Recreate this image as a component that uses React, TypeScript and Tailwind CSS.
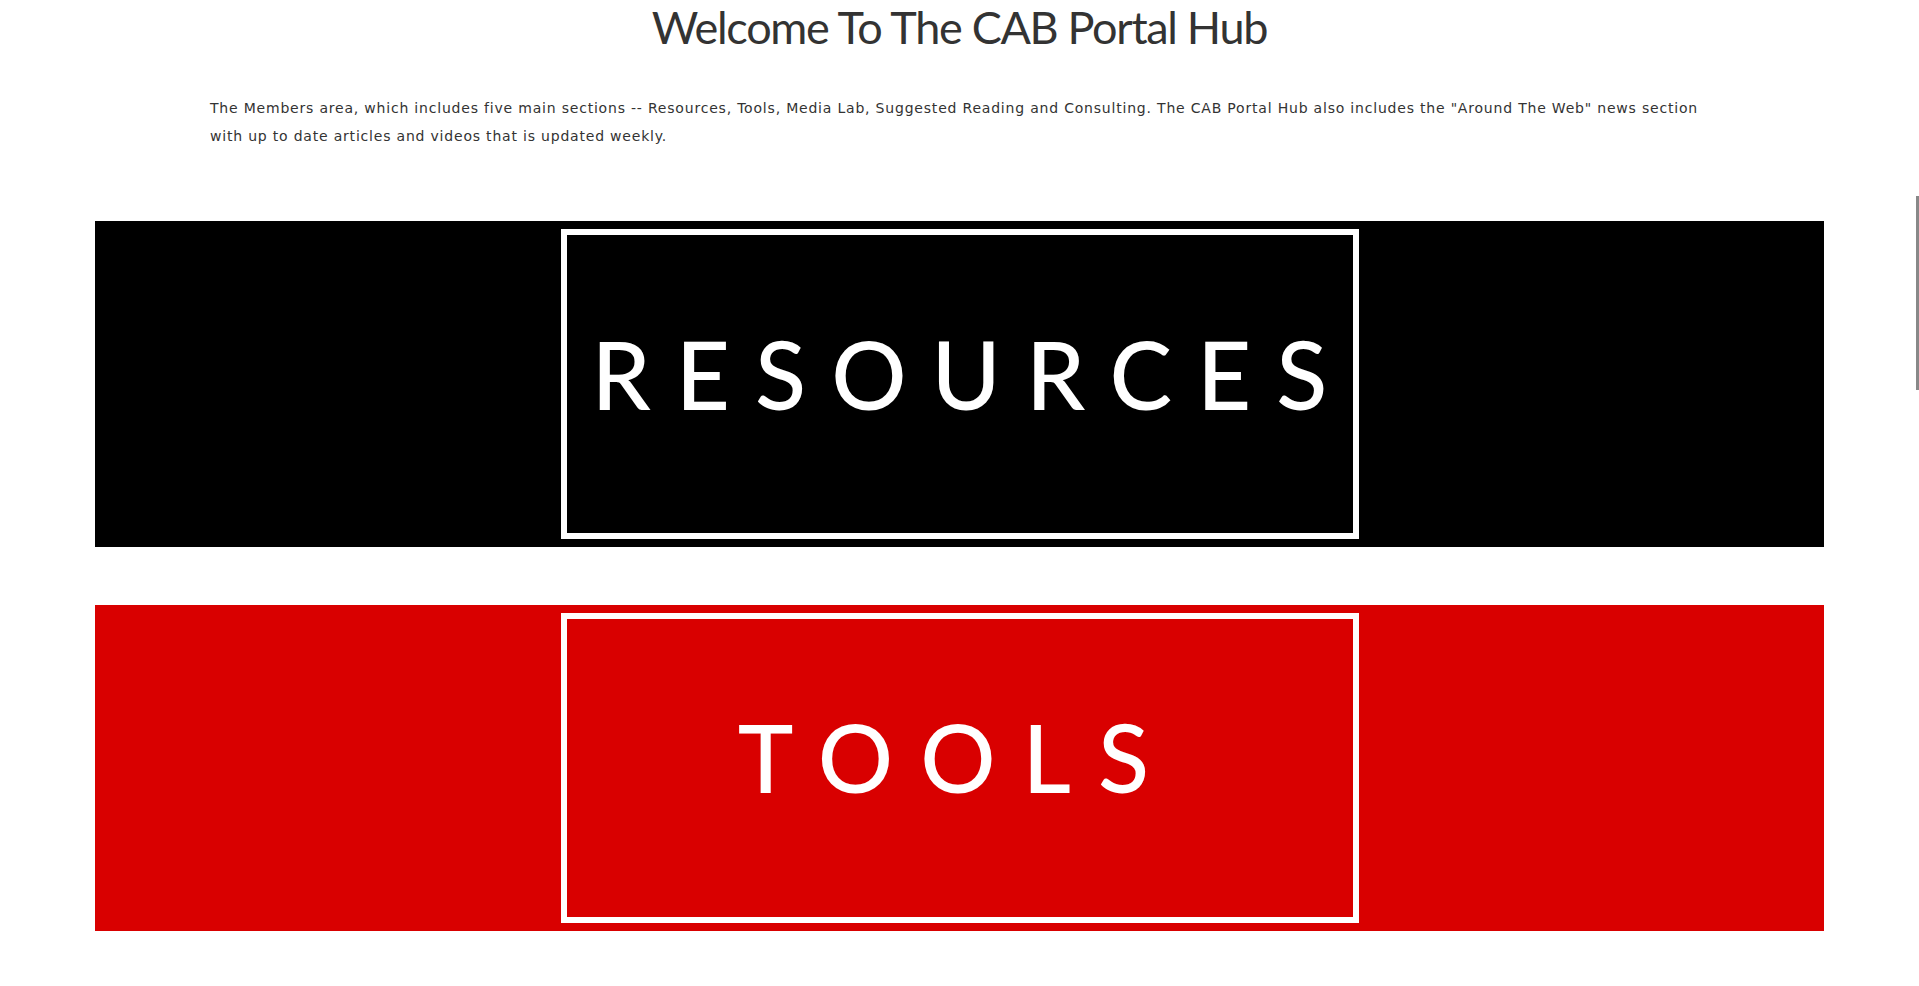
import React from "react";

function Banner({ label, bg, textClass }: { label: string; bg: string; textClass: string }) {
  return (
    <div className={`h-[326px] w-full flex items-center justify-center ${bg}`}>
      <div className="w-[798px] h-[310px] border-[6px] border-white flex items-center justify-center">
        <span
          className={`text-white text-[94px] leading-none font-medium ${textClass}`}
          style={{ fontFamily: "Lato, 'Noto Sans', sans-serif" }}
        >
          {label}
        </span>
      </div>
    </div>
  );
}

export default function App() {
  return (
    <div className="relative h-screen overflow-hidden bg-white">
      <h1
        className="text-center text-[45px] leading-[54px] text-[#333333] font-normal tracking-[-1.3px]"
        style={{ fontFamily: "Lato, 'Noto Sans', sans-serif" }}
      >
        Welcome To The CAB Portal Hub
      </h1>
      <p
        className="ml-[210px] w-[1500px] mt-[40px] text-[14px] leading-[28px] text-[#333333] tracking-[0.8px]"
        style={{ fontFamily: "'DejaVu Sans', Verdana, sans-serif" }}
      >
        The Members area, which includes five main sections -- Resources, Tools, Media Lab, Suggested Reading and
        Consulting. The CAB Portal Hub also includes the "Around The Web" news section with up to date articles and
        videos that is updated weekly.
      </p>
      <div className="mx-[95px] mt-[71px] flex flex-col gap-[58px]">
        <Banner label="RESOURCES" bg="bg-black" textClass="tracking-[25px] mr-[-25px] pb-[20px]" />
        <Banner label="TOOLS" bg="bg-[#d90000]" textClass="tracking-[27px] mr-[5px] pb-[22px]" />
      </div>
      <div className="absolute right-0 top-[196px] w-[3px] h-[194px] bg-[#888888]" />
    </div>
  );
}
